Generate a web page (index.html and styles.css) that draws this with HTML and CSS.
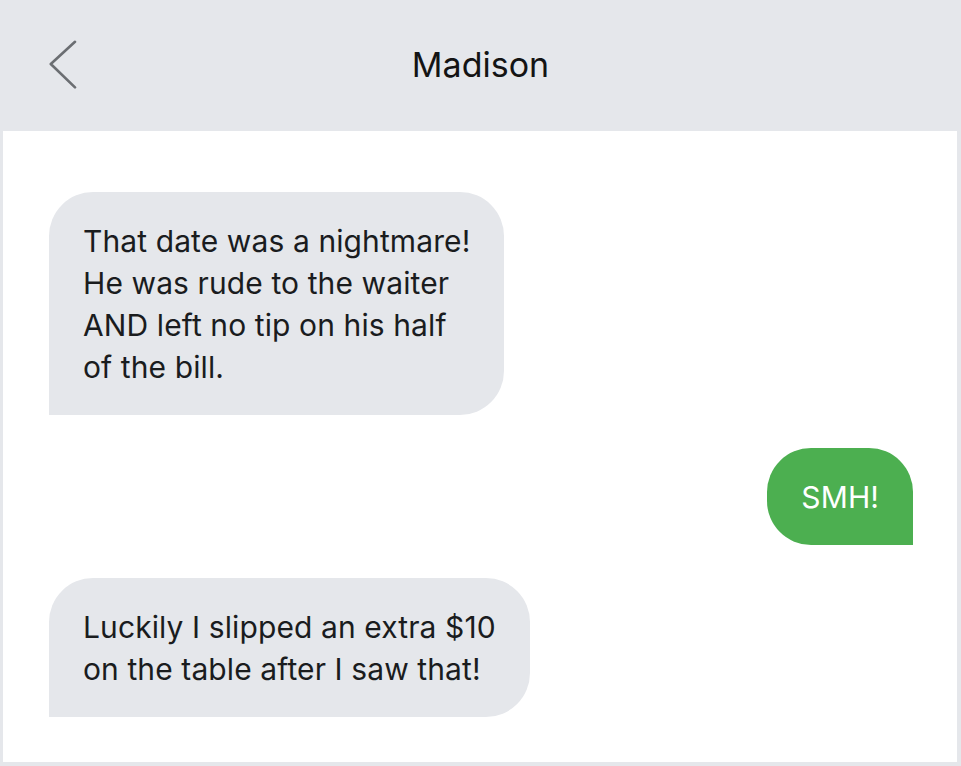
FILE: index.html
```html
<!DOCTYPE html>
<html lang="en">
<head>
    <meta charset="UTF-8">
    <meta name="viewport" content="width=device-width, initial-scale=1.0">
    <title>Madison</title>
    <link rel="stylesheet" href="styles.css">
</head>
<body>
    <div class="phone">
        <div class="header">
            <a href="#" class="back" aria-label="Back">
                <svg width="30" height="52" viewBox="0 0 30 52">
                    <polyline points="27,1.8 2.8,24 27,47.4" fill="none" stroke="#6b6e72" stroke-width="2.6" stroke-linecap="round" stroke-linejoin="round"/>
                </svg>
            </a>
            <div class="title">Madison</div>
            <div></div>
        </div>

        <div class="messages">
            <div class="bubble received">
                That date was a nightmare!<br>
                He was rude to the waiter<br>
                AND left no tip on his half<br>
                of the bill.
            </div>
            <div class="bubble sent">SMH!</div>
            <div class="bubble received">
                Luckily I slipped an extra $10<br>
                on the table after I saw that!
            </div>
        </div>
    </div>
</body>
</html>
```

FILE: styles.css
```css
body {
    margin: 0;
    padding: 0;
    font-family: Inter, "Noto Sans", sans-serif;
    background-color: #ffffff;
}

.phone {
    width: 961px;
    height: 766px;
    box-sizing: border-box;
    border: 4px solid #e5e7eb;
    border-top: none;
    border-left-width: 3px;
    display: flex;
    flex-direction: column;
}

.header {
    background-color: #e5e7eb;
    height: 131px;
    display: grid;
    grid-template-columns: 1fr auto 1fr;
    align-items: center;
    margin: 0 -4px 0 -3px;
    padding: 0 48px;
}

.back {
    display: flex;
    align-items: center;
    height: 52px;
}

.title {
    font-size: 34px;
    color: #141414;
    padding-bottom: 2px;
}

.messages {
    flex: 1;
    display: flex;
    flex-direction: column;
    gap: 33px;
    padding: 61px 44px 0 46px;
}

.bubble {
    font-size: 30px;
    line-height: 42px;
    letter-spacing: 0.1px;
    padding: 27.5px 34px;
}

.received {
    align-self: flex-start;
    background-color: #e5e7eb;
    color: #1a1c1e;
    border-radius: 44px 44px 44px 0;
}

.sent {
    align-self: flex-end;
    background-color: #4caf50;
    color: #ffffff;
    border-radius: 44px 44px 0 44px;
}
```
